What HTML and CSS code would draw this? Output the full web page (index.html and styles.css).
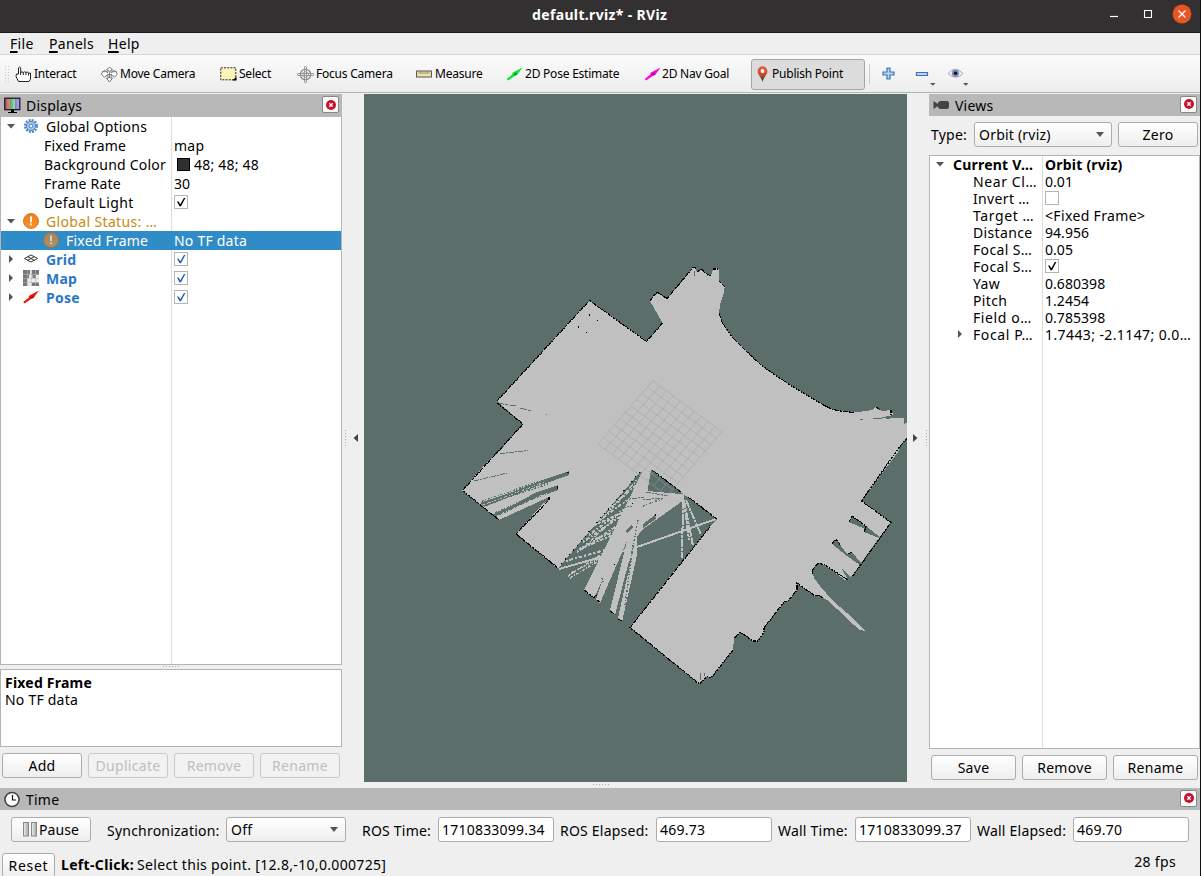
FILE: index.html
```html
<!DOCTYPE html>
<html lang="en">
<head>
<meta charset="utf-8">
<title>default.rviz* - RViz</title>
<link rel="stylesheet" href="styles.css">
</head>
<body>
<svg width="0" height="0" class="defs">
  <defs>
    <linearGradient id="scr"><stop offset="0" stop-color="#b85a5a"/><stop offset=".33" stop-color="#c88"/><stop offset=".34" stop-color="#55a85c"/><stop offset=".66" stop-color="#a2dba2"/><stop offset=".67" stop-color="#7b78cf"/><stop offset="1" stop-color="#b4b4f0"/></linearGradient>
    <linearGradient id="pin" x2="0" y2="1"><stop offset="0" stop-color="#ef5a3c"/><stop offset=".5" stop-color="#c4502e"/><stop offset="1" stop-color="#33301c"/></linearGradient>
    <linearGradient id="bar"><stop offset="0" stop-color="#f0f0ec"/><stop offset="1" stop-color="#a4a49e"/></linearGradient>
    <linearGradient id="orange" x2="0" y2="1"><stop offset="0" stop-color="#ef7d1c"/><stop offset="1" stop-color="#fb9428"/></linearGradient>
    <symbol id="close" viewBox="0 0 10 10"><circle cx="5" cy="5" r="5" fill="#c8102e"/><path d="M3.300 3.300l3.400 3.400M6.700 3.300L3.300 6.700" stroke="#fff" stroke-width="1.300"/></symbol>
    <symbol id="check" viewBox="0 0 14 14"><rect x=".5" y=".5" width="13" height="13" fill="#fff" stroke="#b4b4b4"/><path d="M3 6.500h1.600l1.700 2.800L9.900 3h1.500L7 11.200H5.500z" fill="currentColor"/></symbol>
    <symbol id="box" viewBox="0 0 14 14"><rect x=".5" y=".5" width="13" height="13" fill="#fff" stroke="#b4b4b4"/></symbol>
    <symbol id="arrow" viewBox="0 0 16 14"><path d="M.2 11.900L6.200 7.300 5.600 6 16 .4 10.400 8.300 9.200 8.200 1.600 13.400z" fill="currentColor"/><path d="M6.500 7.500l3.500-2 .7 2.200-2.200 1z" fill="#000" opacity=".28"/></symbol>
    <symbol id="warn" viewBox="0 0 16 16"><circle cx="8" cy="8" r="7.500" fill="url(#orange)" stroke="#c9660f" stroke-width=".8"/><path d="M7 3.500h2v5.700H7zM7 10.500h2v1.800H7z" fill="#fff"/></symbol>
  </defs>
</svg>
<div class="window">
  <header class="titlebar">
    <span class="title">default.rviz* - RViz</span>
    <span class="winctl">
      <svg width="88" height="20" viewBox="0 0 88 20" fill="none" stroke="#fff"><path d="M6 12.500h8" stroke-width="1.200"/><rect x="40.500" y="6.500" width="7" height="7" stroke-width="1.100"/><circle cx="78" cy="10" r="9.400" fill="#e95420" stroke="none"/><path d="M74.500 6.500l7 7m0-7l-7 7" stroke-width="1.400"/></svg>
    </span>
  </header>
  <nav class="menu"><span class="mi m1"><u>F</u>ile</span><span class="mi m2"><u>P</u>anels</span><span class="mi m3"><u>H</u>elp</span></nav>
  <div class="toolbar">
    <i class="handle"></i>
    <span class="tool t1"><svg width="17" height="17" viewBox="0 0 17 17" fill="#fff" stroke="#222"><path d="M3.500 15.500L1 10.500 1.500 8h2V1.800Q4.500.4 5.700 1.800V6.500Q7 5 8.300 6.500 9.700 5 11 6.500 12.300 5.300 13.500 7h2v6.200l-1.500 2.300z"/><path d="M5.700 6v3M8.300 6.500V9M11 6.500V9M13.500 7v2.500"/></svg><b>Interact</b></span>
    <span class="tool t2"><svg width="17" height="17" viewBox="0 0 17 17" fill="#fff" stroke="#666" stroke-width=".9"><path d="M8.500 1l3 3H9.700l.6 2.800 3.200-2.500L16 7.200l-.1 1.300-2.400 2.700-3.200-2.400-.6 3.400h1.800l-3 3.800-3-3.800h1.800l-.6-3.400-3.200 2.400L.6 8.500V7l3-2.700 3.100 2.500L7.300 4H5.500z"/><path d="M1 5.700h5M11 5.700h5M6 8.500h5M8.500 5v7" stroke="#777"/></svg><b>Move Camera</b></span>
    <span class="tool t3"><svg width="17" height="14" viewBox="0 0 17 14"><rect x=".8" y=".8" width="15" height="12" fill="#fbf3b8" stroke="#222" stroke-dasharray="2 1.200"/><path d="M16.500 9.500v4h-4z"/></svg><b>Select</b></span>
    <span class="tool t4"><svg width="17" height="17" viewBox="0 0 17 17" fill="none" stroke="#8c8c8c"><circle cx="8.500" cy="8.500" r="5.200" stroke-width="1.300"/><circle cx="8.500" cy="8.500" r="2.800" stroke-width=".8"/><path d="M7.500 1v15M9.500 1v15M1 7.500h15M1 9.500h15" stroke-width=".8"/><path d="M7.500 1.500l1-1.500 1 1.500M7.500 15.500l1 1.500 1-1.500M1.500 7.500L0 8.500l1.500 1M15.500 7.500l1.500 1-1.500 1"/></svg><b>Focus Camera</b></span>
    <span class="tool t5"><svg width="17" height="8" viewBox="0 0 17 8"><rect x=".5" y="1" width="15" height="6" fill="#efe6a8" stroke="#555"/><path d="M3 1.500V4M5 1.500V4M7 1.500V4M9 1.500V4M11 1.500V4M13 1.500V4" stroke="#777" stroke-width=".8"/></svg><b>Measure</b></span>
    <span class="tool t6"><svg class="green" width="17" height="14"><use href="#arrow"/></svg><b>2D Pose Estimate</b></span>
    <span class="tool t7"><svg class="magenta" width="17" height="14"><use href="#arrow"/></svg><b>2D Nav Goal</b></span>
    <span class="tool t8"><svg width="11" height="17" viewBox="0 0 11 17"><path d="M5.500 16C5 12 .6 9 .6 5.200a4.900 4.900 0 0 1 9.800 0C10.400 9 6 12 5.500 16z" fill="url(#pin)"/><circle cx="5.500" cy="5" r="1.900" fill="#fff"/></svg><b>Publish Point</b></span>
    <i class="sep"></i>
    <span class="tool t9"><svg width="90" height="24" viewBox="0 0 90 24"><path d="M5 6h3v4h4v3H8v4H5v-4H1v-3h4z" fill="#b9d5f5" stroke="#3b72b5" stroke-width="1.200"/><path d="M34.500 10.500h11v3h-11z" fill="#b9d5f5" stroke="#3b72b5" stroke-width="1.200"/><path d="M48 21h5.500L50.800 23.800zM81 21h5.500L83.800 23.800z" fill="#555"/><path d="M66 11.500q7-8.500 15 0-7 7.500-15 0z" fill="#f3f3f3" stroke="#aaa"/><circle cx="73.500" cy="11.200" r="3.700" fill="#7f90c4"/><circle cx="73.500" cy="11.200" r="1.700" fill="#111"/></svg></span>
  </div>
  <main class="body">
    <section class="dock left">
      <div class="dhead"><svg width="17" height="17" viewBox="0 0 17 17"><rect x=".8" y="1.200" width="15" height="11.500" fill="url(#scr)" stroke="#111" stroke-width="1.200"/><path d="M7 13h3v2h3v1H4v-1h3z"/></svg><span class="h1">Displays</span><i class="x"><svg width="10" height="10"><use href="#close"/></svg></i></div>
      <div class="tree ltree">
        <div class="row"><svg class="tw" viewBox="0 0 8 8"><path d="M0 2h8L4 6.500z"/></svg><svg class="ic" viewBox="0 0 16 16" fill="none" stroke="#4a82c4"><circle cx="8" cy="8" r="5.800" stroke-width="2.400" stroke-dasharray="1.800 1.240"/><circle cx="8" cy="8" r="4.600" fill="#a9c9ee"/><circle cx="8" cy="8" r="2" fill="#e8f1fb"/></svg><span class="n">Global Options</span></div>
        <div class="row"><span class="n sub">Fixed Frame</span><span class="v">map</span></div>
        <div class="row"><span class="n sub">Background Color</span><span class="v"><i class="sw"></i>48; 48; 48</span></div>
        <div class="row"><span class="n sub">Frame Rate</span><span class="v num">30</span></div>
        <div class="row"><span class="n sub wide">Default Light</span><span class="v"><svg width="14" height="14"><use href="#check"/></svg></span></div>
        <div class="row"><svg class="tw" viewBox="0 0 8 8"><path d="M0 2h8L4 6.500z"/></svg><svg class="ic"><use href="#warn"/></svg><span class="n warn wide">Global Status: …</span></div>
        <div class="row sel"><svg class="ic ic2"><use href="#warn"/></svg><span class="n">Fixed Frame</span><span class="v">No TF data</span></div>
        <div class="row blue"><svg class="tw" viewBox="0 0 8 8"><path d="M2 0v8l4-4z"/></svg><svg class="ic" viewBox="0 0 16 16" fill="none" stroke="#333"><path d="M1.500 7.500L8 4l6.500 3.500L8 11zM4.700 5.700l6.500 3.600M11.300 5.700L4.700 9.300"/></svg><span class="n">Grid</span><span class="v"><svg width="14" height="14"><use href="#check"/></svg></span></div>
        <div class="row blue"><svg class="tw" viewBox="0 0 8 8"><path d="M2 0v8l4-4z"/></svg><svg class="ic" viewBox="0 0 16 16"><path d="M0 0h16v16H0z" fill="#ececec"/><path d="M0 0h7v4.500H6V8H4v8H0zM9 0h7v5h-3v3H9.500V5H9zM9 12.500h7V16H9z" fill="#777"/><path d="M4.500 0v16M8.500 0v16M12.500 0v16M0 4.500h16M0 8.500h16M0 12.500h16" stroke="#bbb" stroke-width=".6"/></svg><span class="n">Map</span><span class="v"><svg width="14" height="14"><use href="#check"/></svg></span></div>
        <div class="row blue"><svg class="tw" viewBox="0 0 8 8"><path d="M2 0v8l4-4z"/></svg><svg class="ic red"><use href="#arrow"/></svg><span class="n">Pose</span><span class="v"><svg width="14" height="14"><use href="#check"/></svg></span></div>
      </div>
      <div class="hdots"></div>
      <div class="desc"><b>Fixed Frame</b><span>No TF data</span></div>
      <div class="btns"><span class="btn w80">Add</span><span class="btn w80 off">Duplicate</span><span class="btn w80 off">Remove</span><span class="btn w80 off">Rename</span></div>
    </section>
    <div class="split sl"><i class="vdots"></i><svg width="5" height="8" viewBox="0 0 5 8"><path d="M5 0v8L.5 4z" fill="#444"/></svg></div>
    <div class="center">
      <svg class="map" width="543" height="688" viewBox="364 94 543 688" shape-rendering="crispEdges">
        <path fill="#c0c0c0" d="M589.500 300.500L646.500 341.500 662.500 323 650 301 657 292 667 298.500 680 284 693 267.500 696 268 697 273 699 270 702 269 705 273 708 274.500 711 276 713 270 715 268 719 269V281L725 287 723 296 720 305 719 313 722 322 732 337 745 350 760 364 775 375 790 385 805 394 820 403 831 409 843 411.500 855 412.500 865 411 872 410 876 407 882 411 892 410 893 415 882 417.500 904 418 905 423H907V438L900 447 898 452 861.500 501 891 522.500 880 537 867 527 852 516.500 849 522 865 529 864 532 879 538 861 563 852 552 847 554 836 539 832 544 847 556 860 565 851 577 842 569 848 580 845 580 825 565 818 563 812 571 814 578 820 586 833 601 847 613 857 623 865 631 860 630 847 619 837 609 827 600 818 595 815 596 797 583 797 590 788 601 784 602 764 628 764 632 758 641 753 641 740 632 734 639 733 650 719 668 711 678 707 676 701 683 698 683 630 627.500 683 560 710 527 704 522 717 519 688 497 642 472 640 472 558 568.500 516 534 549 497 499 520 462.500 490.500 488 461 498 453 523 424 497 401z"/>
        <g fill="#5b6e6a">
          <path d="M645 473L684 494 686 497 717 519 710 526 684 560 655 592 630 628 600 610 559 569z"/>
          <path d="M569 471L569 475 555 480 540 485 520 493 484 507 480 503 515 491 540 481zM558 485L558 490 534 499 494 518 492 515 515 504 535 493zM550 497L548 501 533 508 499 521z"/>
        </g>
        <path fill="#c0c0c0" d="M642 472L651 470 647.500 491 684 494 684 500 642 530 637 537 637 555 622 622 618 618 631 560 629 561 615 615 610 610 627 541 600 603 596 600 603 579 594 598 584 590 609 540z"/>
        <path fill="#5b6e6a" d="M651 470L647.500 491 680 494 681 491zM643 524L655 515 656 519 643 528zM632 524L626 531 627 533 633 528z"/>
        <g fill="none" stroke="#c0c0c0">
          <path d="M559 569L640 546 716 519" stroke-width="2"/>
          <path d="M683 501L682 558M684 500L693 546M686 500L701 535M684 500L689 540" stroke-width="2" stroke-dasharray="8 .7 3 1"/>
          <path d="M566 561L612 548M579 549L613 535M577 552L617 526M583 542L624 514M589 535L626 508M600 520L630 498M609 509L635 486M590 527L622 513M595 539L614 532" stroke-width="2" stroke-dasharray="2 1.500 4 2"/>
          <path d="M570 578L600 560M571 573L606 555M568 576L609 549M586 545L616 517M598 524L635 482M618 503L636 480" stroke-width="1.500" stroke-dasharray="3 2 1 1"/>
          <path d="M483 505L545 482M488 510L550 487M497 516L547 493M481 501L530 485" stroke-dasharray="2 2 1 1"/>
        </g>
        <g fill="none" stroke="#5b6e6a">
          <path d="M497 403L516 406M520 408L532 411M546 414h1" stroke-dasharray="7 1 3 2"/><path d="M500 453.500L528 450.500M474 481L507 473M660 498L642 500M646 492L668 496M623 500L644 497M612 510L632 506" stroke-dasharray="5 1 2 1"/>
          <path d="M482 501L538 482M485 505L548 484M495 513L548 489M643 506L664 498M638 520L628 574M633 545L625 606M602 578L603 582" stroke-dasharray="2 1.500 1 2" stroke-width="1.500"/>
          <path d="M694 271v5M707 272v4M724 288v4M860 419h3M873 418h9M886 418h4M904 419v5M700 680v-7M704 673v3"/>
        </g>
        <g fill="none" stroke="#000" stroke-width="1.200" stroke-dasharray="3 .8 1.500 .6">
          <path d="M497 401L589.500 300.500 646.500 341.500 662.500 323M650 301L657 292 667 298.500 693 267.500 696 268M697 272L702 269 705 273 711 276M713 269h6M719 281L725 287M719 313L722 322 732 337 745 350 760 364 775 375 790 385 805 394 820 403 831 409 843 411.500 855 412.500M876 407L880 410M891 410v5M907 438L898 449 861.500 501 891 522.500 852 577M849 522L852 516 867 527M864 532L866 527M832 544L836 539 840 545M848 554L852 552M848 580L825 565 818 563 812 571 813 574M823 598L818 595 815 596 797 583 797 590 788 601 784 602 764 628 764 632 758 641 753 641 740 632 734 639M733 650L711 678 707 676 701 683 698 683 630 627.500 709 528 710 525M717 519L688 497M681 492L652 470M497 403L523 424 462.500 490.500 499 520M549 497L549 500 516 534 558 568M567 472L569 473M557 486L558 489M584 590L594 598 597 594M597 600L600 602M610 611L614 614M618 619L622 621"/>
          <path d="M640 472L558 568" stroke-dasharray="1 5"/>
        </g>
        <path d="M589 314h1v2h-1zM597 320h1v1h-1zM578 326h1v2h-1zM586 332h1v1h-1zM632 503h1v1h-1zM655 514h1v2h-1zM614 564h1v1h-1z"/>
        <g fill="none" stroke="#a0a0a4" stroke-opacity=".5" shape-rendering="auto">
          <path d="M652.700 380.700L598.300 444M659.600 385.800L605.200 449.200M666.500 390.900L612.100 454.400M673.400 396L619 459.600M680.300 401.100L625.900 464.800M687.200 406.200L632.800 470M694.100 411.300L639.700 475.200M701 416.400L646.600 480.400M707.900 421.500L653.500 485.600M714.800 426.600L660.400 490.800M721.700 431.700L667.300 496"/>
          <path d="M652.700 380.700L721.700 431.700M647.300 387L716.300 438.100M641.800 393.400L710.800 444.600M636.400 399.700L705.400 451M630.900 406L699.900 457.400M625.500 412.400L694.500 463.900M620.100 418.700L689.100 470.300M614.600 425L683.600 476.700M609.200 431.300L678.200 483.100M603.700 437.700L672.700 489.600M598.300 444L667.300 496"/>
        </g>
      </svg>
      <div class="cdots"></div>
    </div>
    <div class="split sr"><svg width="5" height="8" viewBox="0 0 5 8"><path d="M0 0v8l4.500-4z" fill="#444"/></svg><i class="vdots"></i></div>
    <section class="dock right">
      <div class="dhead rhead"><svg width="17" height="12" viewBox="0 0 17 12"><path d="M.5 2L5 5V3.500L7 2h7.500l1.500 1.500v5L14.500 10H7L5 8.500V7L.5 10z" fill="#444"/></svg><span class="h2">Views</span><i class="x"><svg width="10" height="10"><use href="#close"/></svg></i></div>
      <div class="typerow"><span class="ty">Type:</span><span class="combo c1"><span>Orbit (rviz)</span><svg width="8" height="5"><path d="M0 0h8L4 5z" fill="#555"/></svg></span><span class="btn w80">Zero</span></div>
      <div class="tree rtree">
        <div class="row"><svg class="tw" viewBox="0 0 8 8"><path d="M0 2h8L4 6.500z"/></svg><b class="n r0">Current V…</b><b class="v">Orbit (rviz)</b></div>
        <div class="row"><span class="n sub gap5">Near Cl…</span><span class="v num">0.01</span></div>
        <div class="row"><span class="n sub">Invert …</span><span class="v"><svg width="14" height="14"><use href="#box"/></svg></span></div>
        <div class="row"><span class="n sub gap5">Target …</span><span class="v wide">&lt;Fixed Frame&gt;</span></div>
        <div class="row"><span class="n sub">Distance</span><span class="v num">94.956</span></div>
        <div class="row"><span class="n sub">Focal S…</span><span class="v num">0.05</span></div>
        <div class="row"><span class="n sub">Focal S…</span><span class="v"><svg width="14" height="14"><use href="#check"/></svg></span></div>
        <div class="row"><span class="n sub">Yaw</span><span class="v num">0.680398</span></div>
        <div class="row"><span class="n sub">Pitch</span><span class="v num">1.2454</span></div>
        <div class="row"><span class="n sub gap5">Field o…</span><span class="v num">0.785398</span></div>
        <div class="row"><svg class="tw tw2" viewBox="0 0 8 8"><path d="M2 0v8l4-4z"/></svg><span class="n gap5">Focal P…</span><span class="v gap4">1.7443; -2.1147; 0.0…</span></div>
      </div>
      <div class="btns rbtns"><span class="btn w85">Save</span><span class="btn w85">Remove</span><span class="btn w85">Rename</span></div>
    </section>
  </main>
  <div class="dhead thead"><svg width="17" height="17" viewBox="0 0 17 17"><circle cx="8" cy="8.500" r="7" fill="#fff" stroke="#444" stroke-width="1.600"/><path d="M8.500 4v5H12" fill="none" stroke="#111" stroke-width="1.200"/></svg><span class="h3">Time</span><i class="x"><svg width="10" height="10"><use href="#close"/></svg></i></div>
  <div class="timerow">
    <span class="btn w80 pause"><svg width="15" height="15" viewBox="0 0 15 15"><rect x=".5" y=".5" width="5" height="13.500" fill="url(#bar)" stroke="#888"/><rect x="8.500" y=".5" width="5" height="13.500" fill="url(#bar)" stroke="#888"/></svg><span>Pause</span></span>
    <span class="lab l1">Synchronization:</span><span class="combo c2"><span>Off</span><svg width="8" height="5"><path d="M0 0h8L4 5z" fill="#555"/></svg></span>
    <span class="lab l2">ROS Time:</span><span class="inp">1710833099.34</span>
    <span class="lab l3">ROS Elapsed:</span><span class="inp">469.73</span>
    <span class="lab l4">Wall Time:</span><span class="inp">1710833099.37</span>
    <span class="lab l5">Wall Elapsed:</span><span class="inp">469.70</span>
  </div>
  <footer class="status"><span class="btn reset">Reset</span><b class="st1">Left-Click:</b><span class="st2">Select this point. [12.8,-10,0.000725]</span><span class="fps">28 fps</span></footer>
</div>
</body>
</html>
```
FILE: styles.css
```css
* { box-sizing: border-box; }
body { margin: 0; width: 1201px; height: 876px; overflow: hidden; background: #111; font: 14px/18px "Noto Sans", "Open Sans", sans-serif; letter-spacing: .22px; color: #000; }
.defs { position: absolute; }
svg { display: block; flex: none; }
i { font-style: normal; flex: none; }
span, b { white-space: nowrap; }
.window { width: 1200px; height: 876px; background: #efefef; overflow: hidden; display: flex; flex-direction: column; }
.titlebar { height: 33px; flex: none; background: #323030; border-bottom: 1px solid #1c1b1b; color: #fff; display: grid; grid-template-columns: 532px 1fr auto; align-items: center; font-weight: 700; letter-spacing: .35px; }
.title { grid-column: 2; padding-bottom: 3px; }
.winctl { padding: 0 8px 4px 0; }
.menu { height: 22px; flex: none; display: flex; padding: 2px 0 0 10px; border-bottom: 1px solid #d5d5d5; letter-spacing: .3px; }
.menu u { text-underline-offset: 2px; text-decoration-thickness: 2px; }
.m1 { width: 39px; }
.m2 { width: 59px; }
.toolbar { height: 38px; flex: none; display: flex; align-items: center; padding-top: 1px; background: linear-gradient(#fbfbfb, #ededed); border-bottom: 1px solid #b4b4b4; font-size: 12px; letter-spacing: -.22px; }
.toolbar b { font-weight: 400; }
.handle { width: 5px; height: 18px; margin: 0 6px 0 4px; background: radial-gradient(circle, #c4c4c4 .7px, transparent 1px) 0 0 / 3px 3px; }
.tool { display: flex; align-items: center; gap: 2px; height: 31px; }
.t1 { width: 86px; }
.t2 { width: 119px; }
.t3 { width: 77px; }
.t4 { width: 119px; }
.t5 { width: 90px; }
.t6 { width: 138px; }
.t7 { width: 107px; gap: 1px; }
.t8 { width: 114px; padding-left: 5px; gap: 4px; background: #dcdcdc; border: 1px solid #a5a5a5; border-radius: 3px; }
.sep { width: 1px; height: 20px; background: #ccc; margin: 0 12px 0 4px; }
.green { color: #0be52a; }
.magenta { color: #f0d; }
.red { color: #f01808; }
.body { height: 695px; flex: none; padding-top: 1px; display: flex; }
.dock { display: flex; flex-direction: column; }
.left { width: 342px; }
.right { width: 271px; }
.dhead { height: 23px; flex: none; background: #b8b8b8; display: flex; align-items: center; padding: 0 3px 0 4px; gap: 5px; }
.x { margin-left: auto; width: 17px; height: 17px; margin-top: -2px; background: #fafafa; border: 1px solid #888; border-radius: 2px; display: flex; align-items: center; justify-content: center; }
.rhead { height: 22px; }
.h2, .h3 { padding-top: 2px; }
.tree { background: #fff; border: 1px solid #b4b4b4; }
.ltree { height: 548px; border-top: 0; background: linear-gradient(#ddd, #ddd) 170px 0 / 1px 100% no-repeat #fff; }
.ltree .row { display: grid; grid-template-columns: 20px 25px 126px 1fr; height: 19px; align-items: center; }
.n { grid-column: 3; }
.v { grid-column: 4; padding-left: 2px; display: flex; align-items: center; }
.num { letter-spacing: .05px; }
.wide { letter-spacing: .35px; }
.gap4 { letter-spacing: .4px; }
.gap5 { letter-spacing: .6px; }
.row > * { grid-row: 1; }
.row .v svg { margin-top: -1px; }
.sub { margin-left: -2px; }
.tw { width: 8px; height: 8px; fill: #555; grid-column: 1; margin-left: 6px; margin-top: -1px; }
.ic { width: 16px; height: 16px; grid-column: 2; margin-left: 2px; margin-top: -2px; }
.ic2 { margin-left: 22px; opacity: .65; }
.sel { background: #308cc6; color: #fff; }
.sel .n { margin-left: 20px; }
.warn { color: #c88a10; }
.blue .n { color: #2a78c8; font-weight: 700; }
.blue .v { color: #1d62ac; }
.sw { width: 13px; height: 13px; background: #303030; border: 1px solid #000; margin: 0 4px 0 3px; }
.hdots, .cdots { height: 4px; display: flex; justify-content: center; }
.hdots::after, .cdots::after { content: ""; width: 18px; height: 3px; background: radial-gradient(circle, #aaa .7px, transparent 1px) 0 0 / 3px 3px; }
.desc { height: 78px; background: #fff; border: 1px solid #b4b4b4; padding: 4px; display: flex; flex-direction: column; line-height: 17px; }
.btns { display: flex; gap: 6px; padding: 6px 2px 0; }
.btn { height: 25px; border: 1px solid #acacac; border-radius: 3px; background: linear-gradient(#fff, #eee); display: flex; align-items: center; justify-content: center; flex: none; letter-spacing: .3px; }
.w80 { width: 80px; }
.w85 { width: 85px; }
.off { color: #bebebe; border-color: #c8c8c8; background: #f2f2f2; }
.split { width: 22px; flex: none; display: flex; align-items: center; height: 688px; }
.sl { padding-left: 2px; gap: 6px; }
.sr { padding-left: 6px; gap: 7px; }
.vdots { width: 3px; height: 18px; background: radial-gradient(circle, #aaa .7px, transparent 1px) 0 0 / 3px 3px; }
.center { width: 543px; flex: none; }
.map { background: #5b6e6a; }
.cdots { margin-left: -70px; padding-top: 1px; }
.typerow { display: flex; align-items: center; padding: 6px 2px 0; height: 31px; }
.ty { width: 43px; }
.combo { height: 25px; border: 1px solid #acacac; border-radius: 3px; background: linear-gradient(#fff, #eee); display: flex; align-items: center; justify-content: space-between; padding: 0 7px 0 4px; flex: none; }
.c1 { width: 138px; margin-right: 6px; }
.c2 { width: 120px; }
.rtree { height: 594px; margin-top: 8px; background: linear-gradient(#ddd, #ddd) 112px 0 / 1px 100% no-repeat #fff; }
.rtree .row { display: grid; grid-template-columns: 23px 20px 70px 1fr; height: 17px; align-items: center; line-height: 17px; }
.rtree .n { margin-left: 0; }
.rtree span.n:not(.gap5) { letter-spacing: .35px; }
.rtree .r0 { grid-column: 2 / 4; }
.rtree .tw2 { grid-column: 1 / 3; margin-left: 26px; }
.thead { height: 22px; }
.timerow { height: 43px; flex: none; display: flex; align-items: center; padding: 0 0 4px 11px; }
.pause { gap: 1px; margin-right: 16px; letter-spacing: .1px; }
.lab { padding-top: 2px; flex: none; }
.l1 { width: 119px; }
.l2 { width: 92px; padding-left: 16px; }
.l3 { width: 102px; padding-left: 6px; }
.l4 { width: 83px; padding-left: 6px; }
.l5 { width: 102px; padding-left: 6px; }
.inp { width: 116px; height: 25px; flex: none; border: 1px solid #acacac; border-radius: 3px; background: #fff; padding: 3px 3px 0; }
.status { flex: none; height: 25px; display: flex; padding: 0 24px 0 2px; line-height: 24px; letter-spacing: .33px; }
.reset { width: 53px; margin-right: 6px; letter-spacing: .7px; }
.fps { margin-left: auto; margin-top: -3px; }
.st2 { margin-left: 3px; }
```
